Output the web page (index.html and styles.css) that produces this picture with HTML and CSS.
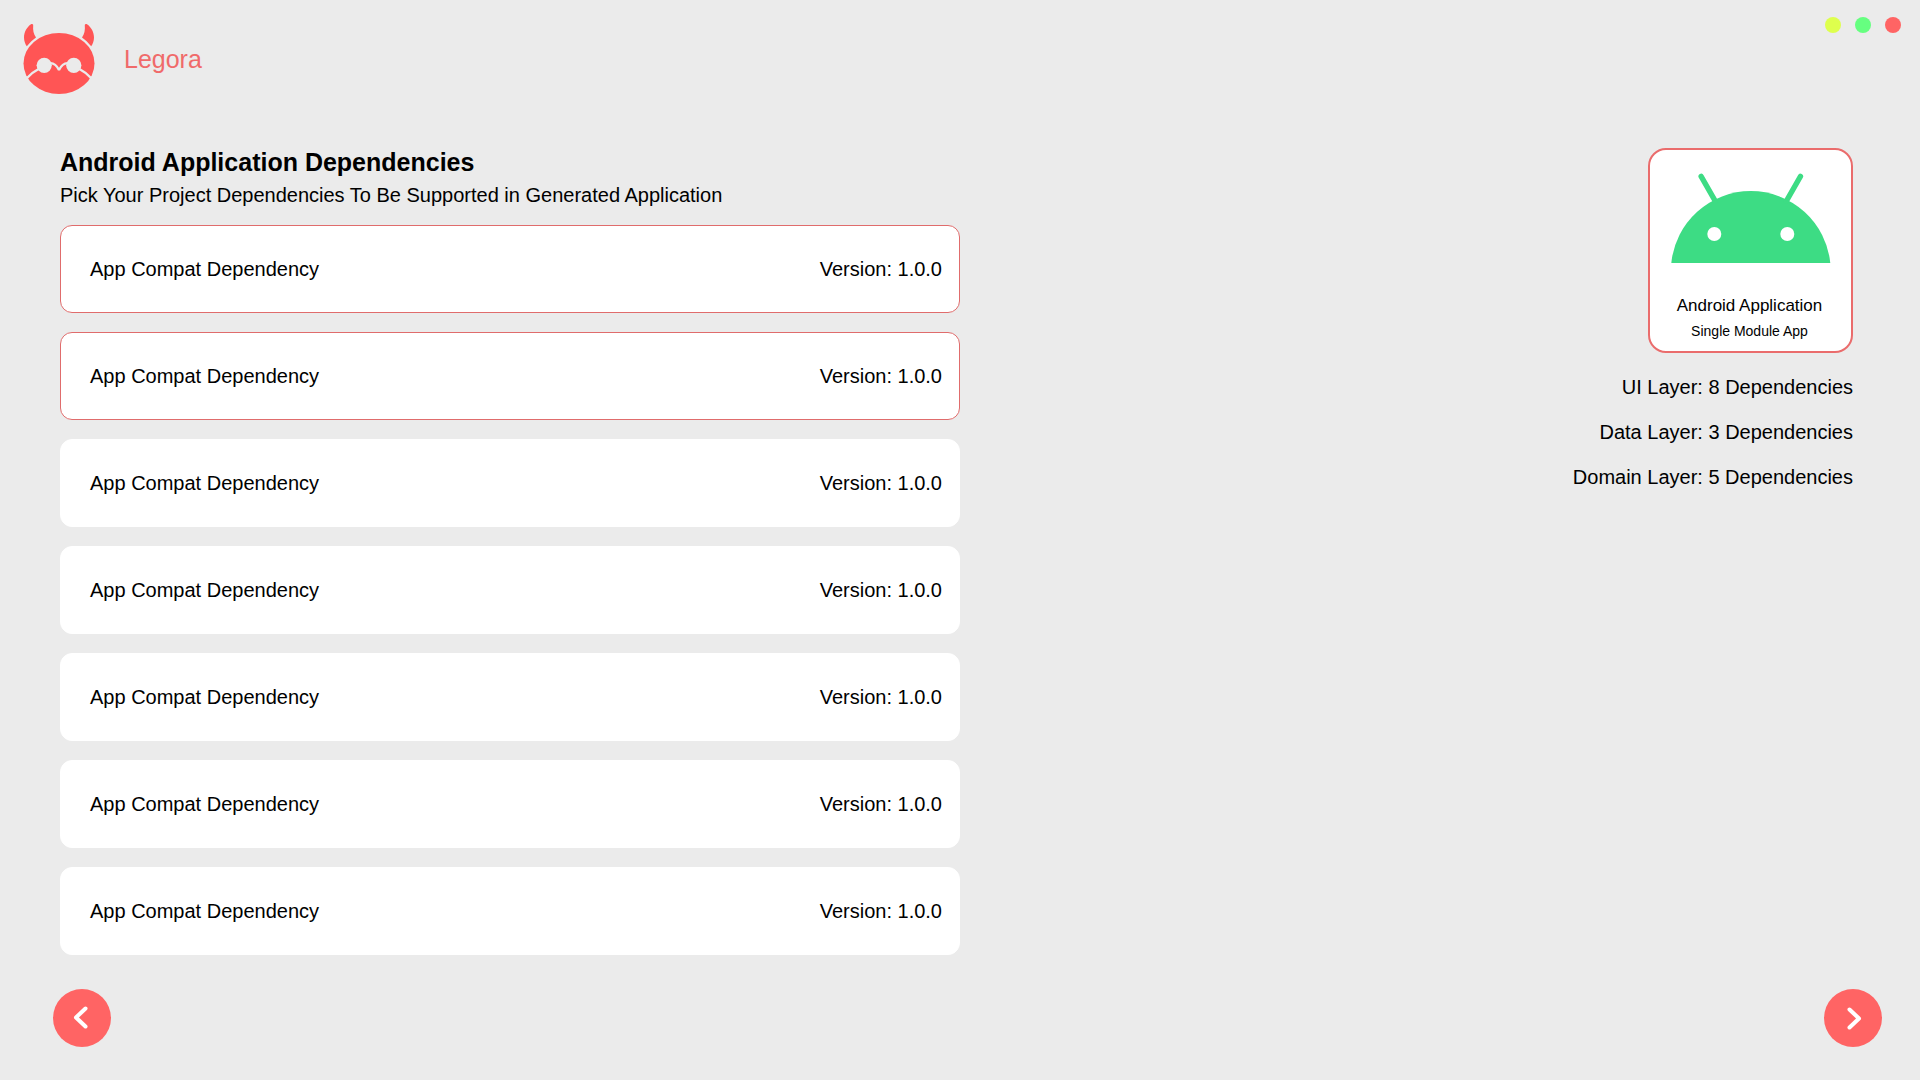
FILE: index.html
```html
<!DOCTYPE html>
<html lang="en">
<head>
  <meta charset="utf-8">
  <meta name="viewport" content="width=device-width, initial-scale=1">
  <title>Legora</title>
  <link rel="stylesheet" href="styles.css">
</head>
<body>
  <header class="topbar">
    <a class="brand" href="#">
      <svg class="brand-logo" viewBox="0 0 70 70" aria-hidden="true">
        <g fill="#ff5555">
          <path d="M7 .3C3 3 0 8 0 13.500C0 17 1.200 20 2.800 22.300C5.500 19 8.500 16 12 13.500C9.500 10 8.800 6 9.200 1.500C9.200 .3 8.200-.3 7 .3Z"/>
          <path d="M63 .3C67 3 70 8 70 13.500C70 17 68.800 20 67.200 22.300C64.500 19 61.500 16 58 13.500C60.500 10 61.200 6 60.800 1.500C60.800 .3 61.800-.3 63 .3Z"/>
          <ellipse cx="35" cy="39.500" rx="35.500" ry="30.500"/>
        </g>
        <g fill="#ebebeb">
          <circle cx="20.200" cy="41.300" r="7.600"/>
          <circle cx="49.800" cy="41.300" r="7.600"/>
        </g>
        <path fill="none" stroke="#ebebeb" stroke-width="2.400" stroke-linejoin="bevel" d="M3 54Q8 48.500 15 44.800M67 54Q62 48.500 55 44.800M25 39.300C30 38.300 32.500 41 35 46C37.500 41 40 38.300 45 39.300"/>
      </svg>
      <span class="brand-name">Legora</span>
    </a>
    <div class="window-controls">
      <button class="dot dot-minimize" type="button" aria-label="Minimize"></button>
      <button class="dot dot-maximize" type="button" aria-label="Maximize"></button>
      <button class="dot dot-close" type="button" aria-label="Close"></button>
    </div>
  </header>

  <main class="content">
    <section class="dependencies">
      <h1 class="title">Android Application Dependencies</h1>
      <p class="subtitle">Pick Your Project Dependencies To Be Supported in Generated Application</p>
      <div class="dependency-list">
        <button class="dependency" type="button" aria-pressed="true"><span>App Compat Dependency</span><span>Version: 1.0.0</span></button>
        <button class="dependency" type="button" aria-pressed="true"><span>App Compat Dependency</span><span>Version: 1.0.0</span></button>
        <button class="dependency" type="button" aria-pressed="false"><span>App Compat Dependency</span><span>Version: 1.0.0</span></button>
        <button class="dependency" type="button" aria-pressed="false"><span>App Compat Dependency</span><span>Version: 1.0.0</span></button>
        <button class="dependency" type="button" aria-pressed="false"><span>App Compat Dependency</span><span>Version: 1.0.0</span></button>
        <button class="dependency" type="button" aria-pressed="false"><span>App Compat Dependency</span><span>Version: 1.0.0</span></button>
        <button class="dependency" type="button" aria-pressed="false"><span>App Compat Dependency</span><span>Version: 1.0.0</span></button>
      </div>
    </section>

    <aside class="summary">
      <div class="project-card">
        <svg class="android" viewBox="0 0 162 90" aria-hidden="true">
          <path fill="#3ddc84" d="M2.300 90A79.900 79.900 0 0 1 161.300 90Z"/>
          <path fill="none" stroke="#3ddc84" stroke-width="5.500" stroke-linecap="round" d="M32.200 3.500L46.200 28M131.400 3.500L117.400 28"/>
          <circle cx="45.300" cy="61" r="7" fill="#fff"/>
          <circle cx="118.300" cy="61" r="7" fill="#fff"/>
        </svg>
        <p class="project-name">Android Application</p>
        <p class="project-type">Single Module App</p>
      </div>
      <ul class="layers">
        <li>UI Layer: 8 Dependencies</li>
        <li>Data Layer: 3 Dependencies</li>
        <li>Domain Layer: 5 Dependencies</li>
      </ul>
    </aside>
  </main>

  <footer class="pager">
    <button class="pager-button" type="button" aria-label="Previous">
      <svg viewBox="0 0 58 58" aria-hidden="true"><path d="M32.500 19.500L23 28.500L32.500 37.500"/></svg>
    </button>
    <button class="pager-button" type="button" aria-label="Next">
      <svg viewBox="0 0 58 58" aria-hidden="true"><path d="M25.500 20.500L35 29.500L25.500 38.500"/></svg>
    </button>
  </footer>
</body>
</html>
```
FILE: styles.css
```css
* {
  box-sizing: border-box;
}

body {
  display: flex;
  flex-direction: column;
  min-height: 100vh;
  margin: 0;
  background: #ebebeb;
  color: #000;
  font: 20px/24px "Liberation Sans", Arial, sans-serif;
}

h1,
p,
ul {
  margin: 0;
  padding: 0;
}

button {
  padding: 0;
  border: 0;
  color: inherit;
  font: inherit;
  cursor: pointer;
}

svg {
  display: block;
}

.topbar {
  display: flex;
  justify-content: space-between;
  align-items: flex-start;
  padding: 17px 19px 54px 24px;
}

.brand {
  display: flex;
  align-items: center;
  gap: 30px;
  margin-top: 7px;
  color: #f06a6a;
  text-decoration: none;
}

.brand-logo {
  width: 70px;
  height: 70px;
  overflow: visible;
}

.brand-name {
  font-size: 25px;
  line-height: 28px;
}

.window-controls {
  display: flex;
  gap: 14px;
}

.dot {
  width: 16px;
  height: 16px;
  border-radius: 50%;
}

.dot-minimize {
  background: #deff4d;
}

.dot-maximize {
  background: #66ff80;
}

.dot-close {
  background: #ff6464;
}

.content {
  display: flex;
  flex: 1;
  justify-content: space-between;
  align-items: flex-start;
  gap: 40px;
  padding: 0 67px 34px 60px;
}

.dependencies {
  flex: 0 1 900px;
}

.title {
  font-size: 25px;
  line-height: 28px;
}

.subtitle {
  margin-top: 7px;
}

.dependency-list {
  display: flex;
  flex-direction: column;
  gap: 19px;
  margin-top: 18px;
}

.dependency {
  display: flex;
  justify-content: space-between;
  align-items: center;
  padding: 31px 17px 31px 29px;
  border: 1px solid #fff;
  border-radius: 12px;
  background: #fff;
}

.dependency[aria-pressed="true"] {
  border-color: #e06c6c;
}

.summary {
  display: flex;
  flex-direction: column;
  align-items: flex-end;
}

.project-card {
  display: flex;
  flex-direction: column;
  align-items: center;
  width: 205px;
  padding: 23px 2px 12px 0;
  border: 2px solid #ea6c6c;
  border-radius: 18px;
  background: #fff;
}

.android {
  width: 162px;
  height: 90px;
}

.project-name {
  margin-top: 33px;
  font-size: 17px;
  line-height: 20px;
}

.project-type {
  margin-top: 7px;
  font-size: 14px;
  line-height: 16px;
}

.layers {
  display: flex;
  flex-direction: column;
  gap: 21px;
  margin-top: 22px;
  list-style: none;
  text-align: right;
}

.pager {
  display: flex;
  justify-content: space-between;
  padding: 0 38px 33px 53px;
}

.pager-button {
  width: 58px;
  height: 58px;
  border-radius: 50%;
  background: #ff6464;
}

.pager-button path {
  fill: none;
  stroke: #fff;
  stroke-width: 4;
  stroke-linecap: round;
  stroke-linejoin: round;
}
```
